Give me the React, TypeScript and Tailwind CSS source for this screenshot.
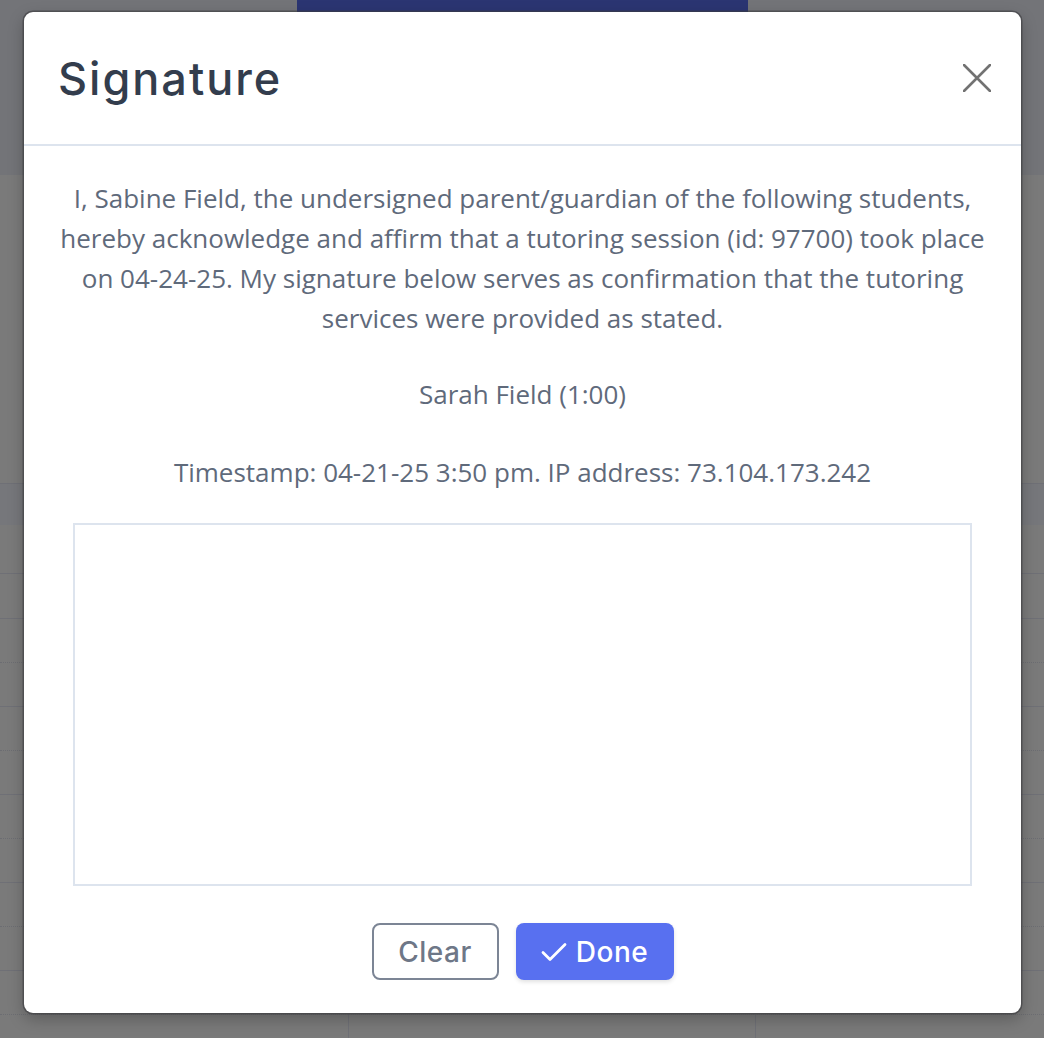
const rows = [483, 573, 618, 662, 706, 750, 794, 838, 882, 926, 970, 1014];

function Backdrop() {
  return (
    <div className="absolute inset-0 bg-[#7a7a7a]">
      <div className="h-[175px] bg-[#737478] relative">
        <div className="absolute left-[297px] top-0 w-[451px] h-[12px] bg-[#2b3572]" />
      </div>
      <div className="absolute left-0 right-0 top-[483px] h-[42px] bg-[#76777b]" />
      {rows.map((y, i) => (
        <div
          key={i}
          className={
            i % 2 === 0 || i < 2
              ? "absolute left-0 right-0 h-px bg-[#6f7076]"
              : "absolute left-0 right-0 h-px border-t border-dotted border-[#6c6d72]"
          }
          style={{ top: y }}
        />
      ))}
      <div className="absolute left-[348px] top-[1014px] bottom-0 w-px bg-[#6f7076]" />
      <div className="absolute left-[755px] top-[1014px] bottom-0 w-px bg-[#6f7076]" />
    </div>
  );
}

export default function App() {
  return (
    <div className="relative w-[1044px] h-[1038px] overflow-hidden">
      <Backdrop />
      <div className="absolute left-[24px] top-[12px] w-[997px] h-[1001px] bg-white rounded-[9px] shadow-[0_0_0_1.5px_rgba(60,60,64,0.6),0_6px_16px_rgba(0,0,0,0.25)] flex flex-col">
        <div className="h-[134px] flex items-center justify-between pl-[34px] pr-[30px] border-b-2 border-[#dde4ee]">
          <h2 className="text-[45px] font-medium tracking-[2px] text-[#333d4d] font-['Inter',sans-serif] leading-none">
            Signature
          </h2>
          <svg width="28" height="28" viewBox="0 0 28 28" className="text-[#727272]">
            <path d="M1 1L27 27M27 1L1 27" stroke="currentColor" strokeWidth="2.6" strokeLinecap="round" />
          </svg>
        </div>
        <div className="flex flex-col items-center px-[30px] pt-[32px] font-['Open_Sans',sans-serif] text-[#5f6a7b] text-[26px] leading-[40px] text-center">
          <p className="max-w-[932px]">
            I, Sabine Field, the undersigned parent/guardian of the following students, hereby acknowledge and affirm that a tutoring session (id: 97700) took place on 04-24-25. My signature below serves as confirmation that the tutoring services were provided as stated.
          </p>
          <p className="mt-[36px]">Sarah Field (1:00)</p>
          <p className="mt-[38px]">Timestamp: 04-21-25 3:50 pm. IP address: 73.104.173.242</p>
          <div className="mt-[31px] w-[899px] h-[363px] border-2 border-[#dde4ee]" />
          <div className="mt-[37px] flex gap-[17px]">
            <button className="w-[127px] h-[57px] rounded-[8px] border-2 border-[#7c8595] text-[#6e7787] text-[28px] font-medium tracking-[0.5px] font-['Inter',sans-serif] bg-white">
              Clear
            </button>
            <button className="w-[158px] h-[57px] rounded-[8px] bg-[#5870f0] text-white text-[28px] font-medium tracking-[0.5px] font-['Inter',sans-serif] flex items-center justify-center gap-[9px] shadow-[0_2px_4px_rgba(0,0,0,0.12)]">
              <svg width="26" height="20" viewBox="0 0 26 20" fill="none">
                <path d="M2 10.5L9 17.5L24 2.5" stroke="currentColor" strokeWidth="2.8" strokeLinecap="round" strokeLinejoin="round" />
              </svg>
              Done
            </button>
          </div>
        </div>
      </div>
    </div>
  );
}
